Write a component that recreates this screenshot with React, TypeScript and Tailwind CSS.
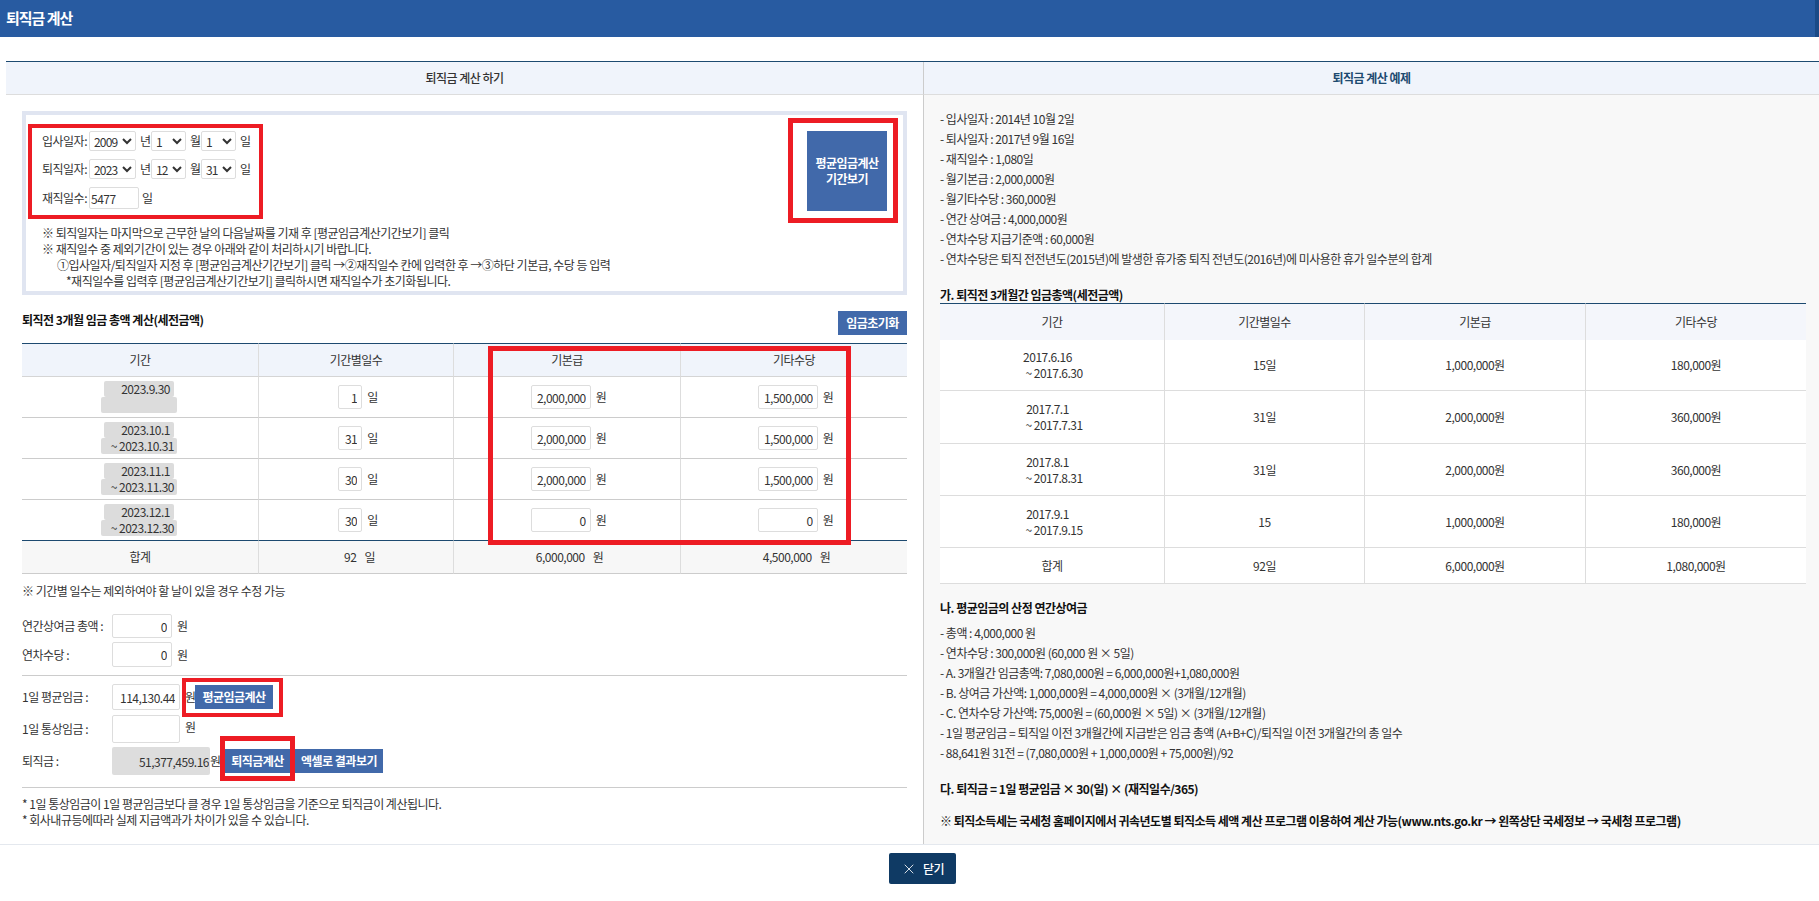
import { X } from 'lucide-react'

const payRows = [
  { from: '2023.9.30', to: '', days: '1', base: '2,000,000', extra: '1,500,000' },
  { from: '2023.10.1', to: '~ 2023.10.31', days: '31', base: '2,000,000', extra: '1,500,000' },
  { from: '2023.11.1', to: '~ 2023.11.30', days: '30', base: '2,000,000', extra: '1,500,000' },
  { from: '2023.12.1', to: '~ 2023.12.30', days: '30', base: '0', extra: '0' },
]

const exampleInfo = [
  '- 입사일자 : 2014년 10월 2일',
  '- 퇴사일자 : 2017년 9월 16일',
  '- 재직일수 : 1,080일',
  '- 월기본급 : 2,000,000원',
  '- 월기타수당 : 360,000원',
  '- 연간 상여금 : 4,000,000원',
  '- 연차수당 지급기준액 : 60,000원',
  '- 연차수당은 퇴직 전전년도(2015년)에 발생한 휴가중 퇴직 전년도(2016년)에 미사용한 휴가 일수분의 합계',
]

const exampleRows = [
  { from: '2017.6.16', to: '~ 2017.6.30', days: '15일', base: '1,000,000원', extra: '180,000원', h: 'h-[51px]' },
  { from: '2017.7.1', to: '~ 2017.7.31', days: '31일', base: '2,000,000원', extra: '360,000원', h: 'h-[53px]' },
  { from: '2017.8.1', to: '~ 2017.8.31', days: '31일', base: '2,000,000원', extra: '360,000원', h: 'h-[52px]' },
  { from: '2017.9.1', to: '~ 2017.9.15', days: '15', base: '1,000,000원', extra: '180,000원', h: 'h-[52px]' },
]

const bonusInfo = [
  '- 총액 : 4,000,000 원',
  '- 연차수당 : 300,000원 (60,000 원 × 5일)',
  '- A. 3개월간 임금총액: 7,080,000원 = 6,000,000원+1,080,000원',
  '- B. 상여금 가산액: 1,000,000원 = 4,000,000원 × (3개월/12개월)',
  '- C. 연차수당 가산액: 75,000원 = (60,000원 × 5일) × (3개월/12개월)',
  '- 1일 평균임금 = 퇴직일 이전 3개월간에 지급받은 임금 총액 (A+B+C)/퇴직일 이전 3개월간의 총 일수',
  '- 88,641원 31전 = (7,080,000원 + 1,000,000원 + 75,000원)/92',
]

const DateSelect = ({ value, width }: { value: string; width: string }) => (
  <select
    defaultValue={value}
    className={`${width} h-[20px] border border-[#dddddd] rounded-[2px] bg-white text-[12px] tracking-[-0.8px] p-0`}
  >
    <option>{value}</option>
  </select>
)

const Num = ({ value, className }: { value: string; className: string }) => (
  <input
    defaultValue={value}
    className={`${className} border border-[#dddddd] rounded-[2px] bg-white text-right text-[12px] pr-[4px] outline-none`}
  />
)

const BlueBtn = ({ className, children }: { className: string; children: React.ReactNode }) => (
  <button className={`${className} bg-[#4169aa] text-white text-[12px] font-bold text-center`}>{children}</button>
)

const App = () => {
  return (
    <div className="w-full h-[901px] overflow-hidden bg-white text-[#333333] text-[12px] leading-[16px] tracking-[-0.5px] font-['Noto_Sans_CJK_KR','Noto_Sans',sans-serif]">
      <header className="h-[37px] flex items-center pl-[6px] pb-[2px] bg-[#285ba1] border-r-[4px] border-[#1b4a86]">
        <h1 className="text-[15px] tracking-[-1px] font-bold text-white">퇴직금 계산</h1>
      </header>

      <div className="mt-[24px] ml-[6px] h-[783px] grid grid-cols-[917px_1fr] border-t border-[#1d4a70]">
        <section className="min-w-0">
          <h2 className="h-[33px] flex items-center justify-center bg-[#f0f4fb] border-b border-[#dddddd] font-medium">
            퇴직금 계산 하기
          </h2>

          <div className="px-[16px] pt-[16px]">
            <div className="relative h-[184px] border-[4px] border-[#e0e5f1] pt-[16px] pl-[16px] pr-[16px]">
              <div className="h-[78px] flex justify-between">
                <div className="flex flex-col gap-[8px]">
                  <div className="h-[20px] flex items-center">
                    <span className="w-[47px]">입사일자:</span>
                    <DateSelect value="2009" width="w-[47px]" />
                    <span className="w-[15px] pl-[4px]">년</span>
                    <DateSelect value="1" width="w-[35px]" />
                    <span className="w-[15px] pl-[4px]">월</span>
                    <DateSelect value="1" width="w-[35px]" />
                    <span className="pl-[4px]">일</span>
                  </div>
                  <div className="h-[20px] flex items-center">
                    <span className="w-[47px]">퇴직일자:</span>
                    <DateSelect value="2023" width="w-[47px]" />
                    <span className="w-[15px] pl-[4px]">년</span>
                    <DateSelect value="12" width="w-[35px]" />
                    <span className="w-[15px] pl-[4px]">월</span>
                    <DateSelect value="31" width="w-[35px]" />
                    <span className="pl-[4px]">일</span>
                  </div>
                  <div className="h-[22px] flex items-center">
                    <span className="w-[47px]">재직일수:</span>
                    <input
                      defaultValue="5477"
                      className="w-[50px] h-[22px] border border-[#dddddd] rounded-[2px] pl-[1px] text-[12px] outline-none"
                    />
                    <span className="pl-[3px]">일</span>
                  </div>
                </div>
                <BlueBtn className="w-[80px] h-[80px]">
                  평균임금계산
                  <br />
                  기간보기
                </BlueBtn>
              </div>
              <div className="mt-[16px]">
                <p>※ 퇴직일자는 마지막으로 근무한 날의 다음날짜를 기재 후 [평균임금계산기간보기] 클릭</p>
                <p>※ 재직일수 중 제외기간이 있는 경우 아래와 같이 처리하시기 바랍니다.</p>
                <p className="pl-[15px]">①입사일자/퇴직일자 지정 후 [평균임금계산기간보기] 클릭 →②재직일수 칸에 입력한 후 →③하단 기본급, 수당 등 입력</p>
                <p className="pl-[24px]">*재직일수를 입력후 [평균임금계산기간보기] 클릭하시면 재직일수가 초기화됩니다.</p>
              </div>
              <div className="absolute left-[2px] top-[9px] w-[235px] h-[95px] border-[4px] border-[#ed1c24]" />
              <div className="absolute left-[762px] top-[3px] w-[110px] h-[105px] border-[5px] border-[#ed1c24]" />
            </div>

            <div className="mt-[16px] flex justify-between items-start">
              <h3 className="mt-[1px] font-bold text-[#111111]">퇴직전 3개월 임금 총액 계산(세전금액)</h3>
              <BlueBtn className="w-[69px] h-[24px]">임금초기화</BlueBtn>
            </div>

            <div className="relative mt-[8px]">
              <table className="w-[885px] table-fixed border-separate border-spacing-0 text-center">
                <colgroup>
                  <col className="w-[237px]" />
                  <col className="w-[195px]" />
                  <col className="w-[227px]" />
                  <col className="w-[226px]" />
                </colgroup>
                <thead>
                  <tr className="bg-[#f0f4fb]">
                    {['기간', '기간별일수', '기본급', '기타수당'].map((t, i) => (
                      <th
                        key={t}
                        className={`h-[34px] font-normal border-t border-t-[#1d4a70] border-b border-b-[#d5d5d5] ${i < 3 ? 'border-r border-r-[#dddddd]' : ''}`}
                      >
                        {t}
                      </th>
                    ))}
                  </tr>
                </thead>
                <tbody>
                  {payRows.map((r, i) => (
                    <tr key={r.from}>
                      <td className={`h-[41px] border-r border-r-[#dddddd] border-b ${i === 3 ? 'border-b-[#1d4a70]' : 'border-b-[#cccccc]'}`}>
                        <div className="pl-[79px] flex flex-col items-start text-right">
                          <div className="ml-[3px] w-[70px] h-[16px] pr-[4px] bg-[#dcdcdc] rounded-[2px]">{r.from}</div>
                          <div className="w-[76px] h-[16px] pr-[3px] bg-[#dcdcdc] rounded-[2px]">{r.to}</div>
                        </div>
                      </td>
                      <td className={`border-r border-r-[#dddddd] border-b ${i === 3 ? 'border-b-[#1d4a70]' : 'border-b-[#cccccc]'}`}>
                        <div className="flex justify-center items-center gap-[5px] pl-[4px]">
                          <Num value={r.days} className="w-[24px] h-[24px]" />
                          <span>일</span>
                        </div>
                      </td>
                      <td className={`border-r border-r-[#dddddd] border-b ${i === 3 ? 'border-b-[#1d4a70]' : 'border-b-[#cccccc]'}`}>
                        <div className="flex justify-center items-center gap-[5px] pl-[3px]">
                          <Num value={r.base} className="w-[60px] h-[24px]" />
                          <span>원</span>
                        </div>
                      </td>
                      <td className={`border-b ${i === 3 ? 'border-b-[#1d4a70]' : 'border-b-[#cccccc]'}`}>
                        <div className="flex justify-center items-center gap-[5px] pl-[3px]">
                          <Num value={r.extra} className="w-[60px] h-[24px]" />
                          <span>원</span>
                        </div>
                      </td>
                    </tr>
                  ))}
                  <tr className="bg-[#f7f7f7]">
                    <td className="h-[33px] border-r border-r-[#dddddd] border-b border-b-[#cccccc]">합계</td>
                    <td className="border-r border-r-[#dddddd] border-b border-b-[#cccccc]">
                      <div className="flex justify-center gap-[8px] pl-[7px]"><span>92</span><span>일</span></div>
                    </td>
                    <td className="border-r border-r-[#dddddd] border-b border-b-[#cccccc]">
                      <div className="flex justify-center gap-[8px] pl-[5px]"><span>6,000,000</span><span>원</span></div>
                    </td>
                    <td className="border-b border-b-[#cccccc]">
                      <div className="flex justify-center gap-[8px] pl-[5px]"><span>4,500,000</span><span>원</span></div>
                    </td>
                  </tr>
                </tbody>
              </table>
              <div className="absolute left-[466px] top-[3px] w-[363px] h-[199px] border-[5px] border-[#ed1c24]" />
            </div>

            <p className="mt-[9px]">※ 기간별 일수는 제외하여야 할 날이 있을 경우 수정 가능</p>

            <div className="mt-[15px] h-[24px] flex items-center">
              <span className="w-[90px]">연간상여금 총액 :</span>
              <Num value="0" className="w-[60px] h-[24px]" />
              <span className="pl-[5px]">원</span>
            </div>
            <div className="mt-[4px] h-[25px] flex items-center">
              <span className="w-[90px]">연차수당 :</span>
              <Num value="0" className="w-[60px] h-[25px]" />
              <span className="pl-[5px]">원</span>
            </div>
            <div className="mt-[8px] border-t border-[#cccccc]" />

            <div className="relative mt-[8px] h-[26px] flex items-center">
              <span className="w-[90px]">1일 평균임금 :</span>
              <Num value="114,130.44" className="w-[68px] h-[26px]" />
              <span className="pl-[5px] w-[15px]">원</span>
              <BlueBtn className="w-[78px] h-[24px]">평균임금계산</BlueBtn>
              <div className="absolute left-[160px] -top-[6px] w-[101px] h-[39px] border-[4px] border-[#ed1c24]" />
            </div>
            <div className="mt-[5px] h-[28px] flex items-center">
              <span className="w-[90px]">1일 통상임금 :</span>
              <Num value="" className="w-[68px] h-[28px]" />
              <span className="pl-[5px] pb-[4px]">원</span>
            </div>
            <div className="relative mt-[4px] h-[28px] flex items-center">
              <span className="w-[90px]">퇴직금 :</span>
              <input
                defaultValue="51,377,459.16"
                className="w-[98px] h-[28px] bg-[#dddddd] rounded-[2px] text-right text-[12px] pr-[1px] outline-none"
              />
              <span className="w-[15px]">원</span>
              <BlueBtn className="w-[65px] h-[24px]">퇴직금계산</BlueBtn>
              <BlueBtn className="ml-[5px] w-[88px] h-[24px]">엑셀로 결과보기</BlueBtn>
              <div className="absolute left-[198px] -top-[11px] w-[75px] h-[45px] border-[5px] border-[#ed1c24]" />
            </div>
            <div className="mt-[12px] border-t border-[#cccccc]" />

            <p className="mt-[8px]">* 1일 통상임금이 1일 평균임금보다 클 경우 1일 통상임금을 기준으로 퇴직금이 계산됩니다.</p>
            <p>* 회사내규등에따라 실제 지급액과가 차이가 있을 수 있습니다.</p>
          </div>
        </section>

        <section className="min-w-0 flex flex-col">
          <h2 className="h-[33px] flex items-center justify-center bg-[#f0f4fb] border-b border-[#dddddd] border-l border-l-[#cccccc] font-bold text-[#1d4a70]">
            퇴직금 계산 예제
          </h2>
          <div className="flex-1 bg-[#f8f8f8] border-l border-[#cccccc] pl-[16px] pr-[13px] pt-[14px]">
            {exampleInfo.map((t) => (
              <p key={t} className="leading-[20px]">{t}</p>
            ))}

            <h3 className="mt-[18px] font-bold text-[#111111]">가. 퇴직전 3개월간 임금총액(세전금액)</h3>
            <table className="w-full table-fixed border-separate border-spacing-0 text-center bg-white">
              <colgroup>
                <col className="w-[225px]" />
                <col className="w-[200px]" />
                <col className="w-[221px]" />
                <col />
              </colgroup>
              <thead>
                <tr className="bg-[#f4f6fb]">
                  {['기간', '기간별일수', '기본급', '기타수당'].map((t, i) => (
                    <th key={t} className={`h-[37px] font-normal border-t border-t-[#1d4a70] ${i < 3 ? 'border-r border-r-[#dddddd]' : ''}`}>
                      {t}
                    </th>
                  ))}
                </tr>
              </thead>
              <tbody>
                {exampleRows.map((r) => (
                  <tr key={r.from}>
                    <td className={`${r.h} border-r border-r-[#dddddd] border-b border-b-[#dddddd]`}>
                      <div className="pr-[9px]">{r.from}</div>
                      <div className="pl-[4px]">{r.to}</div>
                    </td>
                    <td className="border-r border-r-[#dddddd] border-b border-b-[#dddddd]">{r.days}</td>
                    <td className="border-r border-r-[#dddddd] border-b border-b-[#dddddd]">{r.base}</td>
                    <td className="border-b border-b-[#dddddd]">{r.extra}</td>
                  </tr>
                ))}
                <tr>
                  <td className="h-[36px] border-r border-r-[#dddddd] border-b border-b-[#dddddd]">합계</td>
                  <td className="border-r border-r-[#dddddd] border-b border-b-[#dddddd]">92일</td>
                  <td className="border-r border-r-[#dddddd] border-b border-b-[#dddddd]">6,000,000원</td>
                  <td className="border-b border-b-[#dddddd]">1,080,000원</td>
                </tr>
              </tbody>
            </table>

            <h3 className="mt-[16px] font-bold text-[#111111]">나. 평균임금의 산정 연간상여금</h3>
            <div className="mt-[7px]">
              {bonusInfo.map((t) => (
                <p key={t} className="leading-[20px]">{t}</p>
              ))}
            </div>
            <p className="mt-[18px] font-bold text-[#111111]">다. 퇴직금 = 1일 평균임금 × 30(일) × (재직일수/365)</p>
            <p className="mt-[16px] font-bold text-[#111111]">
              ※ 퇴직소득세는 국세청 홈페이지에서 귀속년도별 퇴직소득 세액 계산 프로그램 이용하여 계산 가능(www.nts.go.kr → 왼쪽상단 국세정보 → 국세청 프로그램)
            </p>
          </div>
        </section>
      </div>

      <footer className="h-[57px] border-t border-[#e4e8ee] pt-[8px] pl-[26px] flex justify-center items-start">
        <button className="w-[67px] h-[31px] flex items-center justify-center gap-[6px] rounded-[2px] bg-[#0f3a64] text-white font-medium">
          <X size={16} strokeWidth={1.25} />
          닫기
        </button>
      </footer>
    </div>
  )
}

export default App
